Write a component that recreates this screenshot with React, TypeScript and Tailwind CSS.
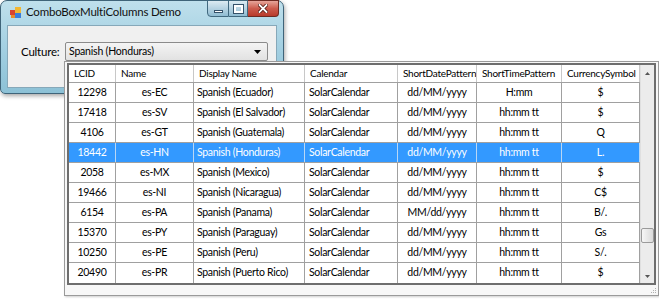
import React from "react";

const rows: string[][] = [
  ["12298", "es-EC", "Spanish (Ecuador)", "SolarCalendar", "dd/MM/yyyy", "H:mm", "$"],
  ["17418", "es-SV", "Spanish (El Salvador)", "SolarCalendar", "dd/MM/yyyy", "hh:mm tt", "$"],
  ["4106", "es-GT", "Spanish (Guatemala)", "SolarCalendar", "dd/MM/yyyy", "hh:mm tt", "Q"],
  ["18442", "es-HN", "Spanish (Honduras)", "SolarCalendar", "dd/MM/yyyy", "hh:mm tt", "L."],
  ["2058", "es-MX", "Spanish (Mexico)", "SolarCalendar", "dd/MM/yyyy", "hh:mm tt", "$"],
  ["19466", "es-NI", "Spanish (Nicaragua)", "SolarCalendar", "dd/MM/yyyy", "hh:mm tt", "C$"],
  ["6154", "es-PA", "Spanish (Panama)", "SolarCalendar", "MM/dd/yyyy", "hh:mm tt", "B/."],
  ["15370", "es-PY", "Spanish (Paraguay)", "SolarCalendar", "dd/MM/yyyy", "hh:mm tt", "Gs"],
  ["10250", "es-PE", "Spanish (Peru)", "SolarCalendar", "dd/MM/yyyy", "hh:mm tt", "S/."],
  ["20490", "es-PR", "Spanish (Puerto Rico)", "SolarCalendar", "dd/MM/yyyy", "hh:mm tt", "$"],
];

const headers = ["LCID", "Name", "Display Name", "Calendar", "ShortDatePattern", "ShortTimePattern", "CurrencySymbol"];
const widths = ["w-[47px]", "w-[78px]", "w-[111px]", "w-[93px]", "w-[79px]", "w-[85px]", "w-[78px]"];
const aligns = ["justify-center", "justify-center", "justify-start pl-[3px]", "justify-start pl-[4px]", "justify-center", "justify-center", "justify-center"];

function AppIcon() {
  return (
    <svg width="11" height="11" viewBox="0 0 11 11">
      <rect x="0" y="3" width="5" height="5" fill="#d9432f" />
      <rect x="5" y="0" width="6" height="6" fill="#f2b632" />
      <rect x="5" y="6" width="6" height="5" fill="#3b7dd8" />
      <rect x="1" y="8" width="4" height="3" fill="#e98a2a" />
    </svg>
  );
}

export default function App() {
  return (
    <div className="relative w-[659px] h-[299px] bg-white overflow-hidden text-black" style={{ fontFamily: 'Lato, "Open Sans", sans-serif' }}>
      {/* Window */}
      <div className="w-[284px] h-[94px] rounded-t-[7px] rounded-b-[5px] border border-[#3f6479] bg-gradient-to-b from-[#bfe0ec] via-[#a4d0e2] to-[#8cc1d6] flex flex-col px-[6px] pb-[5px] shadow-[1px_2px_4px_rgba(0,0,0,0.35)]">
        <div className="h-[24px] flex items-start">
          <div className="flex items-center h-[22px] ml-[3px]">
            <AppIcon />
            <span className="ml-[5px] text-[11.5px] tracking-[-0.2px] text-[#111]">ComboBoxMultiColumns Demo</span>
          </div>
          <div className="ml-auto mr-[-2px] flex h-[17px] mt-[-1px]">
            <div className="w-[22px] h-full rounded-bl-[4px] border border-[#41697f] bg-gradient-to-b from-[#dcebf2] via-[#b6d3e2] to-[#8fbcd2] flex items-center justify-center">
              <div className="w-[9px] h-[3px] mt-[5px] bg-white border border-[#35526a]" />
            </div>
            <div className="w-[19px] h-full border-y border-r border-[#41697f] bg-gradient-to-b from-[#dcebf2] via-[#b6d3e2] to-[#8fbcd2] flex items-center justify-center">
              <div className="w-[9px] h-[8px] border-2 border-white outline outline-1 outline-[#35526a]" />
            </div>
            <div className="w-[31px] h-full rounded-br-[4px] border-y border-r border-[#6e2a22] bg-gradient-to-b from-[#e6a59a] via-[#cc5b4d] to-[#b83a2b] flex items-center justify-center">
              <svg width="10" height="9" viewBox="0 0 10 9">
                <path d="M1.5 1l7 7M8.5 1l-7 7" stroke="#4a120c" strokeWidth="3.4" strokeLinecap="square" />
                <path d="M1.5 1l7 7M8.5 1l-7 7" stroke="#ffffff" strokeWidth="1.8" strokeLinecap="square" />
              </svg>
            </div>
          </div>
        </div>
        <div className="flex-1 bg-[#f0f0f0] border border-[#86a8b9] flex items-start pt-[16px] pl-[13px]">
          <span className="w-[44px] text-[11.5px] tracking-[-0.2px] leading-[19px]">Culture:</span>
          <div className="w-[203px] h-[19px] rounded-[2px] border border-[#8b8b8b] bg-gradient-to-b from-[#f4f4f4] to-[#e2e2e2] flex items-center pl-[3px] pr-[6px]">
            <span className="text-[10.5px] tracking-[-0.2px] flex-1">Spanish (Honduras)</span>
            <svg width="7" height="4" viewBox="0 0 7 4"><path d="M0 0h7L3.5 4z" fill="#000" /></svg>
          </div>
        </div>
      </div>

      {/* Dropdown popup */}
      <div className="absolute left-[64px] top-[61px] w-[595px] h-[235px] border border-[#9a9a9a] bg-[#f7f7f7] shadow-[1px_1px_2px_rgba(0,0,0,0.2)]">
        <div className="ml-[2px] mt-[1px] w-[589px] h-[222px] border-2 border-[#6e6e6e] bg-white flex">
          <div className="w-[571px] flex flex-col">
            <div className="flex h-[18px] border-b border-[#a0a0a0] bg-white">
              {headers.map((h, i) => (
                <div key={h} className={`${widths[i]} shrink-0 h-full border-r border-[#c8c8c8] flex items-center pl-[5px] text-[10px] tracking-[-0.25px] whitespace-nowrap overflow-hidden`}>
                  {h}
                </div>
              ))}
            </div>
            {rows.map((r, ri) => {
              const sel = ri === 3;
              return (
                <div key={r[0]} className={`flex h-[20px] ${ri === rows.length - 1 ? "" : "border-b"} border-[#a0a0a0] ${sel ? "bg-[#3399ff] text-white" : ""}`}>
                  {r.map((c, ci) => (
                    <div key={ci} className={`${widths[ci]} shrink-0 h-full border-r ${sel ? "border-[#b9d7f5]" : "border-[#a0a0a0]"} flex items-center ${aligns[ci]} text-[10.5px] tracking-[-0.3px] whitespace-nowrap`}>
                      {c}
                    </div>
                  ))}
                </div>
              );
            })}
          </div>
          {/* Scrollbar */}
          <div className="flex-1 bg-[#ececec] border-l border-[#e0e0e0] flex flex-col items-center">
            <div className="h-[17px] w-full flex items-center justify-center">
              <svg width="5" height="3" viewBox="0 0 5 3"><path d="M0 3h5L2.5 0z" fill="#555" /></svg>
            </div>
            <div className="flex-1 w-full relative">
              <div className="absolute left-[0px] right-[0px] top-[146px] h-[15px] rounded-[2px] border border-[#9a9a9a] bg-gradient-to-r from-[#f6f6f6] to-[#dadada]" />
            </div>
            <div className="h-[14px] w-full flex items-center justify-center">
              <svg width="5" height="3" viewBox="0 0 5 3"><path d="M0 0h5L2.5 3z" fill="#555" /></svg>
            </div>
          </div>
        </div>
        {/* size grip */}
        <svg className="absolute right-[1px] bottom-[1px]" width="8" height="8" viewBox="0 0 8 8">
          <rect x="6" y="2" width="1" height="1" fill="#b0b0b0" />
          <rect x="4" y="4" width="1" height="1" fill="#b0b0b0" />
          <rect x="6" y="4" width="1" height="1" fill="#b0b0b0" />
          <rect x="2" y="6" width="1" height="1" fill="#b0b0b0" />
          <rect x="4" y="6" width="1" height="1" fill="#b0b0b0" />
          <rect x="6" y="6" width="1" height="1" fill="#b0b0b0" />
        </svg>
      </div>
    </div>
  );
}
